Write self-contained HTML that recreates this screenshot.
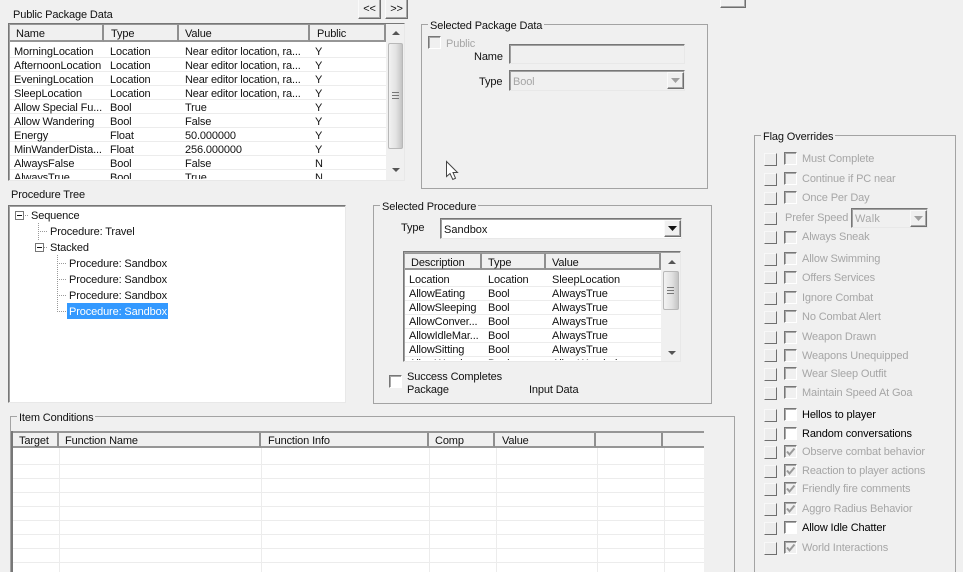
<!DOCTYPE html>
<html><head><meta charset="utf-8"><style>
*{box-sizing:border-box}
html,body{margin:0;padding:0;background:#f0f0f0}
#p{position:relative;width:963px;height:572px;overflow:hidden;background:#f0f0f0;font:11px/14px "Liberation Sans",sans-serif;color:#111;letter-spacing:-.13px}
#p div,#p span,#p svg{position:absolute}
.t{white-space:nowrap;height:14px;margin-top:1px}
.n{letter-spacing:-.18px}
.g{color:#a6a6a6}
.grp{border:1px solid #a3a3a3}
.lg{background:#f0f0f0;padding:0 2px;white-space:nowrap;height:14px;line-height:16px}
.sunk{border:1px solid;border-color:#777 #e8e8e8 #e8e8e8 #777;box-shadow:inset 1px 1px 0 #a0a0a0}
.btn{background:#f0f0f0;border:1px solid;border-color:#fafafa #6f6f6f #6f6f6f #fafafa;box-shadow:inset -1px -1px 0 #a8a8a8}
.cb{width:13px;height:13px;border:1px solid;border-color:#777 #fff #fff #777;box-shadow:inset 1px 1px 0 #a8a8a8}
.cw{background:#fff}
.fb{width:13px;height:13px;left:764px;background:#ececec;border:1px solid;border-color:#f8f8f8 #6f6f6f #6f6f6f #f8f8f8}
.fc{left:784px}
.ft{left:802px}
.hl{height:1px;background:#ececec}
.vl{width:1px;background:#ececec}
.hd{background:#f0f0f0;border-right:2px solid #8f8f8f;border-bottom:2px solid #969696;border-top:1px solid #969696;height:18px;padding-top:2px;padding-left:6px;line-height:14px;white-space:nowrap}
</style></head><body><div id="p">

<div class="btn" style="left:720px;top:-10px;width:26px;height:18px"></div>

<span class="t" style="left:13px;top:7px">Public Package Data</span>
<div class="btn" style="left:358px;top:-2px;width:23px;height:21px;text-align:center;line-height:20px;font-size:11px">&lt;&lt;</div>
<div class="btn" style="left:385px;top:-2px;width:23px;height:21px;text-align:center;line-height:20px;font-size:11px">&gt;&gt;</div>

<!-- list 1 -->
<div class="sunk" style="left:8px;top:23px;width:397px;height:158px;background:#fff;overflow:hidden"></div>
<div style="left:10px;top:24px;width:378px;height:18px;background:#f0f0f0"></div>
<div class="hd" style="left:10px;top:24px;width:94px;padding-left:6px">Name</div>
<div class="hd" style="left:104px;top:24px;width:75px;padding-left:7px">Type</div>
<div class="hd" style="left:179px;top:24px;width:131px;padding-left:6px">Value</div>
<div class="hd" style="left:310px;top:24px;width:76px;padding-left:7px">Public</div>
<div style="left:386px;top:24px;width:18px;height:156px;background:#f0f0f0"></div>
<div style="left:388px;top:43px;width:15px;height:106px;background:linear-gradient(90deg,#f2f2f2,#e2e2e2 55%,#c4c4c4);border:1px solid #b8b8b8;border-radius:2px"></div>
<div style="left:392px;top:92px;width:7px;height:7px;border-top:1px solid #777;border-bottom:1px solid #777"></div>
<div style="left:392px;top:95px;width:7px;height:1px;background:#777"></div>
<svg style="left:392px;top:31px" width="8" height="5"><path d="M4 0L8 4H0z" fill="#555"/></svg>
<svg style="left:392px;top:168px" width="8" height="5"><path d="M0 0H8L4 4z" fill="#555"/></svg>

<div style="left:10px;top:43px;width:376px;height:136px;overflow:hidden;background:#fff">
<div class="hl" style="left:0;top:14px;width:376px"></div><div class="hl" style="left:0;top:28px;width:376px"></div><div class="hl" style="left:0;top:42px;width:376px"></div><div class="hl" style="left:0;top:56px;width:376px"></div><div class="hl" style="left:0;top:70px;width:376px"></div><div class="hl" style="left:0;top:84px;width:376px"></div><div class="hl" style="left:0;top:98px;width:376px"></div><div class="hl" style="left:0;top:112px;width:376px"></div><div class="hl" style="left:0;top:126px;width:376px"></div>
<span class="t" style="left:4px;top:1px">MorningLocation</span><span class="t" style="left:100px;top:1px">Location</span><span class="t n" style="left:175px;top:1px">Near editor location, ra...</span><span class="t" style="left:305px;top:1px">Y</span>
<span class="t" style="left:4px;top:15px">AfternoonLocation</span><span class="t" style="left:100px;top:15px">Location</span><span class="t n" style="left:175px;top:15px">Near editor location, ra...</span><span class="t" style="left:305px;top:15px">Y</span>
<span class="t" style="left:4px;top:29px">EveningLocation</span><span class="t" style="left:100px;top:29px">Location</span><span class="t n" style="left:175px;top:29px">Near editor location, ra...</span><span class="t" style="left:305px;top:29px">Y</span>
<span class="t" style="left:4px;top:43px">SleepLocation</span><span class="t" style="left:100px;top:43px">Location</span><span class="t n" style="left:175px;top:43px">Near editor location, ra...</span><span class="t" style="left:305px;top:43px">Y</span>
<span class="t" style="left:4px;top:57px">Allow Special Fu...</span><span class="t" style="left:100px;top:57px">Bool</span><span class="t" style="left:175px;top:57px">True</span><span class="t" style="left:305px;top:57px">Y</span>
<span class="t" style="left:4px;top:71px">Allow Wandering</span><span class="t" style="left:100px;top:71px">Bool</span><span class="t" style="left:175px;top:71px">False</span><span class="t" style="left:305px;top:71px">Y</span>
<span class="t" style="left:4px;top:85px">Energy</span><span class="t" style="left:100px;top:85px">Float</span><span class="t" style="left:175px;top:85px">50.000000</span><span class="t" style="left:305px;top:85px">Y</span>
<span class="t" style="left:4px;top:99px">MinWanderDista...</span><span class="t" style="left:100px;top:99px">Float</span><span class="t" style="left:175px;top:99px">256.000000</span><span class="t" style="left:305px;top:99px">Y</span>
<span class="t" style="left:4px;top:113px">AlwaysFalse</span><span class="t" style="left:100px;top:113px">Bool</span><span class="t" style="left:175px;top:113px">False</span><span class="t" style="left:305px;top:113px">N</span>
<span class="t" style="left:4px;top:127px">AlwaysTrue</span><span class="t" style="left:100px;top:127px">Bool</span><span class="t" style="left:175px;top:127px">True</span><span class="t" style="left:305px;top:127px">N</span>
</div>

<!-- selected package data -->
<div class="grp" style="left:421px;top:24px;width:287px;height:165px"></div>
<span class="lg" style="left:428px;top:18px">Selected Package Data</span>
<div class="cb" style="left:428px;top:36px"></div>
<span class="t g" style="left:446px;top:36px">Public</span>
<span class="t" style="left:474px;top:49px">Name</span>
<div class="sunk" style="left:509px;top:44px;width:176px;height:20px"></div>
<span class="t" style="left:479px;top:74px">Type</span>
<div class="sunk" style="left:509px;top:70px;width:176px;height:21px"></div>
<span class="t g" style="left:513px;top:74px">Bool</span>
<div class="btn" style="left:667px;top:72px;width:17px;height:17px"></div>
<svg style="left:671px;top:78px" width="9" height="5"><path d="M0 0H9L4.500 5z" fill="#a0a0a0"/></svg>
<svg style="left:445px;top:160px" width="15" height="21"><path d="M1.500 1.500V16.500L5 13.500L7.800 19.500L10.500 18.200L8 12.500H12.500z" fill="#fff" stroke="#444" stroke-width="1"/></svg>

<!-- tree -->
<span class="t" style="left:11px;top:187px">Procedure Tree</span>
<div class="sunk" style="left:8px;top:205px;width:338px;height:198px;background:#fff"></div>
<svg style="left:14px;top:210px" width="100" height="110" shape-rendering="crispEdges">
<g stroke="#999" fill="none" stroke-dasharray="1 1">
<path d="M11 5.500H15"/><path d="M24.500 13V30"/><path d="M24 21.500H33"/><path d="M30 37.500H34"/>
<path d="M43.500 45V101"/><path d="M43 53.500H52"/><path d="M43 69.500H52"/><path d="M43 85.500H52"/><path d="M43 101.500H53"/>
</g>
<rect x="1.500" y="1.500" width="8" height="8" fill="#fff" stroke="#777"/><path d="M3 5.500H8" stroke="#111"/>
<rect x="21.500" y="33.500" width="8" height="8" fill="#fff" stroke="#777"/><path d="M23 37.500H28" stroke="#111"/>
</svg>
<span class="t" style="left:31px;top:208px">Sequence</span>
<span class="t" style="left:50px;top:224px">Procedure: Travel</span>
<span class="t" style="left:50px;top:240px">Stacked</span>
<span class="t" style="left:69px;top:256px">Procedure: Sandbox</span>
<span class="t" style="left:69px;top:272px">Procedure: Sandbox</span>
<span class="t" style="left:69px;top:288px">Procedure: Sandbox</span>
<div style="left:67px;top:303px;width:101px;height:16px;background:#3399ff"></div>
<span class="t" style="left:69px;top:304px;color:#fff">Procedure: Sandbox</span>

<!-- selected procedure -->
<div class="grp" style="left:373px;top:205px;width:339px;height:199px"></div>
<span class="lg" style="left:380px;top:199px">Selected Procedure</span>
<span class="t" style="left:401px;top:220px">Type</span>
<div class="sunk" style="left:440px;top:218px;width:242px;height:21px;background:#fff"></div>
<span class="t" style="left:444px;top:222px;letter-spacing:0">Sandbox</span>
<div class="btn" style="left:664px;top:220px;width:17px;height:17px"></div>
<svg style="left:668px;top:226px" width="9" height="5"><path d="M0 0H9L4.500 5z" fill="#111"/></svg>

<div class="sunk" style="left:403px;top:251px;width:278px;height:111px;background:#fff"></div>
<div class="hd" style="left:405px;top:253px;width:77px;height:17px">Description</div>
<div class="hd" style="left:482px;top:253px;width:64px;height:17px;padding-left:6px">Type</div>
<div class="hd" style="left:546px;top:253px;width:115px;height:17px;padding-left:6px">Value</div>
<div style="left:661px;top:253px;width:19px;height:108px;background:#f0f0f0"></div>
<div style="left:663px;top:271px;width:16px;height:39px;background:linear-gradient(90deg,#f2f2f2,#e2e2e2 55%,#c4c4c4);border:1px solid #b8b8b8;border-radius:2px"></div>
<div style="left:667px;top:287px;width:7px;height:7px;border-top:1px solid #777;border-bottom:1px solid #777"></div>
<div style="left:667px;top:290px;width:7px;height:1px;background:#777"></div>
<svg style="left:668px;top:260px" width="8" height="5"><path d="M4 0L8 4H0z" fill="#555"/></svg>
<svg style="left:668px;top:351px" width="8" height="5"><path d="M0 0H8L4 4z" fill="#555"/></svg>
<div style="left:405px;top:272px;width:256px;height:88px;overflow:hidden;background:#fff">
<div class="hl" style="left:0;top:14px;width:256px"></div><div class="hl" style="left:0;top:28px;width:256px"></div><div class="hl" style="left:0;top:42px;width:256px"></div><div class="hl" style="left:0;top:56px;width:256px"></div><div class="hl" style="left:0;top:70px;width:256px"></div><div class="hl" style="left:0;top:84px;width:256px"></div>
<span class="t" style="left:4px;top:0px">Location</span><span class="t" style="left:83px;top:0px">Location</span><span class="t" style="left:147px;top:0px">SleepLocation</span>
<span class="t" style="left:4px;top:14px">AllowEating</span><span class="t" style="left:83px;top:14px">Bool</span><span class="t" style="left:147px;top:14px">AlwaysTrue</span>
<span class="t" style="left:4px;top:28px">AllowSleeping</span><span class="t" style="left:83px;top:28px">Bool</span><span class="t" style="left:147px;top:28px">AlwaysTrue</span>
<span class="t" style="left:4px;top:42px">AllowConver...</span><span class="t" style="left:83px;top:42px">Bool</span><span class="t" style="left:147px;top:42px">AlwaysTrue</span>
<span class="t" style="left:4px;top:56px">AllowIdleMar...</span><span class="t" style="left:83px;top:56px">Bool</span><span class="t" style="left:147px;top:56px">AlwaysTrue</span>
<span class="t" style="left:4px;top:70px">AllowSitting</span><span class="t" style="left:83px;top:70px">Bool</span><span class="t" style="left:147px;top:70px">AlwaysTrue</span>
<span class="t" style="left:4px;top:84px">AllowWand...</span><span class="t" style="left:83px;top:84px">Bool</span><span class="t" style="left:147px;top:84px">AllowWandering</span>
</div>
<div class="cb cw" style="left:389px;top:375px"></div>
<span class="t" style="left:407px;top:369px">Success Completes</span>
<span class="t" style="left:407px;top:382px">Package</span>
<span class="t" style="left:529px;top:382px">Input Data</span>

<!-- item conditions -->
<div class="grp" style="left:10px;top:416px;width:725px;height:170px"></div>
<span class="lg" style="left:17px;top:410px">Item Conditions</span>
<div style="left:11px;top:431px;width:693px;height:141px;background:#fff;border-left:2px solid #777"></div>
<div style="left:13px;top:431px;width:691px;height:2px;background:#969696"></div>
<div class="hd" style="left:13px;top:433px;width:46px;height:15px;border-top:0;padding-top:1px;padding-left:6px">Target</div>
<div class="hd" style="left:59px;top:433px;width:202px;height:15px;border-top:0;padding-top:1px;padding-left:6px">Function Name</div>
<div class="hd" style="left:261px;top:433px;width:168px;height:15px;border-top:0;padding-top:1px;padding-left:7px">Function Info</div>
<div class="hd" style="left:429px;top:433px;width:66px;height:15px;border-top:0;padding-top:1px;padding-left:6px">Comp</div>
<div class="hd" style="left:495px;top:433px;width:101px;height:15px;border-top:0;padding-top:1px;padding-left:7px">Value</div>
<div class="hd" style="left:596px;top:433px;width:67px;height:15px;border-top:0"></div>
<div class="hd" style="left:663px;top:433px;width:41px;height:15px;border-top:0;border-right:0"></div>
<div class="hl" style="left:13px;top:464px;width:691px"></div><div class="hl" style="left:13px;top:478px;width:691px"></div><div class="hl" style="left:13px;top:492px;width:691px"></div><div class="hl" style="left:13px;top:506px;width:691px"></div><div class="hl" style="left:13px;top:520px;width:691px"></div><div class="hl" style="left:13px;top:534px;width:691px"></div><div class="hl" style="left:13px;top:548px;width:691px"></div><div class="hl" style="left:13px;top:562px;width:691px"></div>
<div class="vl" style="left:59px;top:448px;height:124px"></div><div class="vl" style="left:261px;top:448px;height:124px"></div><div class="vl" style="left:429px;top:448px;height:124px"></div><div class="vl" style="left:496px;top:448px;height:124px"></div><div class="vl" style="left:597px;top:448px;height:124px"></div><div class="vl" style="left:664px;top:448px;height:124px"></div>

<!-- flags -->
<div class="grp" style="left:754px;top:135px;width:202px;height:450px"></div>
<span class="lg" style="left:761px;top:129px">Flag Overrides</span>

<div class="fb" style="top:153px"></div><div class="cb fc" style="top:152px"></div><span class="t g ft" style="top:151px">Must Complete</span>
<div class="fb" style="top:173px"></div><div class="cb fc" style="top:172px"></div><span class="t g ft" style="top:171px">Continue if PC near</span>
<div class="fb" style="top:192px"></div><div class="cb fc" style="top:191px"></div><span class="t g ft" style="top:190px">Once Per Day</span>
<div class="fb" style="top:212px"></div><span class="t g" style="left:785px;top:210px">Prefer Speed</span>
<div class="sunk" style="left:851px;top:208px;width:77px;height:20px"></div><span class="t g" style="left:855px;top:211px;letter-spacing:.3px">Walk</span>
<div class="btn" style="left:910px;top:210px;width:17px;height:17px"></div>
<svg style="left:914px;top:216px" width="9" height="5"><path d="M0 0H9L4.500 5z" fill="#a0a0a0"/></svg>
<div class="fb" style="top:231px"></div><div class="cb fc" style="top:231px"></div><span class="t g ft" style="top:229px">Always Sneak</span>
<div class="fb" style="top:253px"></div><div class="cb fc" style="top:252px"></div><span class="t g ft" style="top:251px">Allow Swimming</span>
<div class="fb" style="top:271px"></div><div class="cb fc" style="top:271px"></div><span class="t g ft" style="top:270px">Offers Services</span>
<div class="fb" style="top:292px"></div><div class="cb fc" style="top:291px"></div><span class="t g ft" style="top:290px">Ignore Combat</span>
<div class="fb" style="top:311px"></div><div class="cb fc" style="top:310px"></div><span class="t g ft" style="top:309px">No Combat Alert</span>
<div class="fb" style="top:331px"></div><div class="cb fc" style="top:331px"></div><span class="t g ft" style="top:329px">Weapon Drawn</span>
<div class="fb" style="top:349px"></div><div class="cb fc" style="top:349px"></div><span class="t g ft" style="top:348px">Weapons Unequipped</span>
<div class="fb" style="top:368px"></div><div class="cb fc" style="top:367px"></div><span class="t g ft" style="top:366px">Wear Sleep Outfit</span>
<div class="fb" style="top:387px"></div><div class="cb fc" style="top:386px"></div><span class="t g ft" style="top:385px">Maintain Speed At Goa</span>
<div class="fb" style="top:409px"></div><div class="cb cw fc" style="top:408px"></div><span class="t ft" style="top:407px;color:#000">Hellos to player</span>
<div class="fb" style="top:428px"></div><div class="cb cw fc" style="top:427px"></div><span class="t ft" style="top:426px;color:#000">Random conversations</span>
<div class="fb" style="top:446px"></div><div class="cb fc" style="top:445px"></div><span class="t g ft" style="top:444px">Observe combat behavior</span>
<div class="fb" style="top:465px"></div><div class="cb fc" style="top:464px"></div><span class="t g ft" style="top:463px">Reaction to player actions</span>
<div class="fb" style="top:483px"></div><div class="cb fc" style="top:482px"></div><span class="t g ft" style="top:481px">Friendly fire comments</span>
<div class="fb" style="top:503px"></div><div class="cb fc" style="top:502px"></div><span class="t g ft" style="top:501px">Aggro Radius Behavior</span>
<div class="fb" style="top:522px"></div><div class="cb cw fc" style="top:521px"></div><span class="t ft" style="top:520px;color:#000">Allow Idle Chatter</span>
<div class="fb" style="top:542px"></div><div class="cb fc" style="top:541px"></div><span class="t g ft" style="top:540px">World Interactions</span>

<svg style="left:786px;top:447px" width="10" height="10"><path d="M1 4.500L3.500 7.500L8.500 1.500" fill="none" stroke="#999" stroke-width="2"/></svg>
<svg style="left:786px;top:466px" width="10" height="10"><path d="M1 4.500L3.500 7.500L8.500 1.500" fill="none" stroke="#999" stroke-width="2"/></svg>
<svg style="left:786px;top:484px" width="10" height="10"><path d="M1 4.500L3.500 7.500L8.500 1.500" fill="none" stroke="#999" stroke-width="2"/></svg>
<svg style="left:786px;top:504px" width="10" height="10"><path d="M1 4.500L3.500 7.500L8.500 1.500" fill="none" stroke="#999" stroke-width="2"/></svg>
<svg style="left:786px;top:543px" width="10" height="10"><path d="M1 4.500L3.500 7.500L8.500 1.500" fill="none" stroke="#999" stroke-width="2"/></svg>

</div></body></html>
